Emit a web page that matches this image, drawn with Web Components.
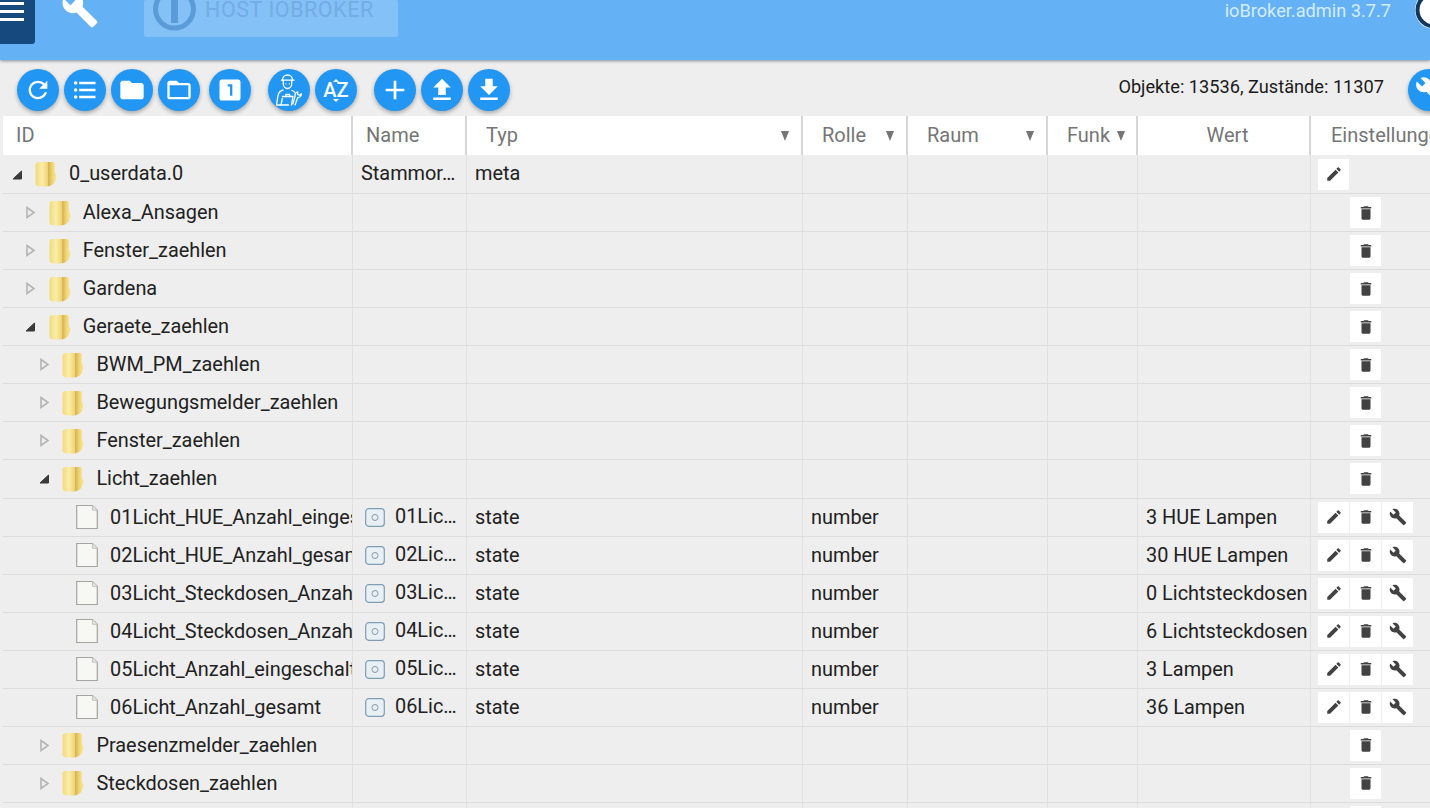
<!DOCTYPE html>
<html lang="de">
<head>
<meta charset="utf-8">
<title>ioBroker.admin</title>
<style>
  html, body {
    margin: 0;
    height: 808px;
    overflow: hidden;
    background: #eeeeee;
    font-family: Roboto, "Liberation Sans", sans-serif;
  }
  object-browser { display: block; }
</style>
</head>
<body>
<object-browser></object-browser>

<script>
const ICONS = {
  refresh: "M17.65 6.35C16.2 4.9 14.21 4 12 4c-4.42 0-7.99 3.58-7.99 8s3.57 8 7.99 8c3.73 0 6.84-2.55 7.73-6h-2.08c-.82 2.33-3.04 4-5.65 4-3.31 0-6-2.69-6-6s2.69-6 6-6c1.66 0 3.14.69 4.22 1.78L13 11h7V4l-2.35 2.35z",
  list: "M4 10.5c-.83 0-1.5.67-1.5 1.5s.67 1.5 1.5 1.5 1.5-.67 1.5-1.5-.67-1.5-1.5-1.5zm0-6c-.83 0-1.5.67-1.5 1.5S3.17 7.5 4 7.5 5.5 6.83 5.5 6 4.83 4.5 4 4.5zm0 12c-.83 0-1.5.68-1.5 1.5s.68 1.5 1.5 1.5 1.5-.68 1.5-1.5-.67-1.5-1.5-1.5zM7 19h14v-2H7v2zm0-6h14v-2H7v2zm0-8v2h14V5H7z",
  folder: "M10 4H4c-1.1 0-1.99.9-1.99 2L2 18c0 1.1.9 2 2 2h16c1.1 0 2-.9 2-2V8c0-1.1-.9-2-2-2h-8l-2-2z",
  folderOpen: "M20 6h-8l-2-2H4c-1.1 0-1.99.9-1.99 2L2 18c0 1.1.9 2 2 2h16c1.1 0 2-.9 2-2V8c0-1.1-.9-2-2-2zm0 12H4V8h16v10z",
  one: "M19 3H5c-1.1 0-2 .9-2 2v14c0 1.1.9 2 2 2h14c1.1 0 2-.9 2-2V5c0-1.1-.9-2-2-2zm-5 14h-2V9h-2V7h4v10z",
  add: "M19 13h-6v6h-2v-6H5v-2h6V5h2v6h6v2z",
  upload: "M9 16h6v-6h4l-7-7-7 7h4zm-4 2h14v2H5z",
  download: "M19 9h-4V3H9v6H5l7 7 7-7zM5 18v2h14v-2H5z",
  edit: "M3 17.25V21h3.75L17.81 9.94l-3.75-3.75L3 17.25zM20.71 7.04c.39-.39.39-1.02 0-1.41l-2.34-2.34c-.39-.39-1.02-.39-1.41 0l-1.83 1.83 3.75 3.75 1.83-1.83z",
  del: "M6 19c0 1.1.9 2 2 2h8c1.1 0 2-.9 2-2V7H6v12zM19 4h-3.5l-1-1h-5l-1 1H5v2h14V4z",
  build: "M22.7 19l-9.1-9.1c.9-2.3.4-5-1.5-6.9-2-2-5-2.4-7.4-1.3L9 6 6 9 1.6 4.7C.4 7.1.9 10.1 2.9 12.1c1.9 1.9 4.6 2.4 6.9 1.5l9.1 9.1c.4.4 1 .4 1.4 0l2.3-2.3c.5-.4.5-1.1.1-1.4z"
};

function svgIcon(name, size, color) {
  return `<svg width="${size}" height="${size}" viewBox="0 0 24 24" fill="${color}"><path d="${ICONS[name]}"/></svg>`;
}

class AppHeader extends HTMLElement {
  constructor() {
    super();
    this.attachShadow({ mode: "open" });
    this.shadowRoot.innerHTML = `
      <style>
        :host {
          display: flex;
          align-items: flex-start;
          position: relative;
          z-index: 2;
          height: 60px;
          background: #64b2f5;
          box-shadow: 0 1px 3px rgba(40,60,90,.55);
        }
        .menu {
          width: 35px;
          height: 44px;
          flex: none;
          background: #164a7e;
          border-radius: 0 0 3px 0;
          display: flex;
          flex-direction: column;
          gap: 5px;
          overflow: hidden;
        }
        .menu i { display: block; width: 24px; height: 3px; background: #fff; flex: none; }
        .menu i:first-child { margin-top: 1.500px; }
        .tool { margin-left: 26px; width: 40px; height: 29px; flex: none; overflow: hidden; }
        .tool svg { display: block; margin-top: -9px; }
        .host {
          margin-left: 43px;
          width: 254px;
          height: 37px;
          flex: none;
          display: flex;
          align-items: flex-start;
          background: rgba(255,255,255,.2);
          border-radius: 2px;
          overflow: hidden;
        }
        .host svg { flex: none; margin-left: 7px; }
        .host span {
          margin-left: 6px;
          font-size: 21.500px;
          line-height: 20px;
          letter-spacing: .55px;
          white-space: nowrap;
          color: #74ace4;
        }
        .ver {
          margin-left: auto;
          font-size: 18.200px;
          line-height: 21px;
          color: #d5ecfd;
          white-space: nowrap;
        }
        .logo { margin-left: 24px; width: 15px; height: 33px; flex: none; overflow: hidden; }
      </style>
      <div class="menu"><i></i><i></i><i></i></div>
      <div class="tool">
        <svg width="38" height="38" viewBox="0 0 24 24" fill="#fff"><path d="${ICONS.build}"/></svg>
      </div>
      <div class="host">
        <svg width="48" height="37" viewBox="0 0 48 37">
          <circle cx="23.500" cy="9" r="19" fill="none" stroke="#5b9bd8" stroke-width="5"/>
          <rect x="20" y="-14" width="7" height="37" fill="#5b9bd8"/>
        </svg>
        <span>HOST IOBROKER</span>
      </div>
      <div class="ver">ioBroker.admin 3.7.7</div>
      <div class="logo">
        <svg width="40" height="33" viewBox="0 0 40 33">
          <circle cx="19" cy="10" r="19" fill="#fff"/>
          <circle cx="19" cy="10" r="16.500" fill="none" stroke="#12365e" stroke-width="4"/>
        </svg>
      </div>
    `;
  }
}

class RoundBtn extends HTMLElement {
  constructor() {
    super();
    this.attachShadow({ mode: "open" });
    this.shadowRoot.innerHTML = `
      <style>
        :host {
          display: flex;
          align-items: center;
          justify-content: center;
          flex: none;
          width: 42px;
          height: 42px;
          border-radius: 50%;
          background: #2196f3;
          box-shadow: 0 2px 4px rgba(0,0,0,.3);
        }
        svg { display: block; }
      </style>
      <slot></slot>
      ${this.getAttribute("icon") ? svgIcon(this.getAttribute("icon"), this.getAttribute("size") || 28, "#fff") : ""}
    `;
  }
}

class ToolBar extends HTMLElement {
  constructor() {
    super();
    this.attachShadow({ mode: "open" });
    this.shadowRoot.innerHTML = `
      <style>
        :host {
          display: flex;
          align-items: flex-start;
          gap: 5px;
          height: 56px;
          box-sizing: border-box;
          padding: 9px 0 0 17px;
          overflow: hidden;
        }
        .ml9 { margin-left: 4px; }
        .ml17 { margin-left: 12px; }
        .status {
          margin-left: auto;
          margin-right: 19px;
          font-size: 18.200px;
          line-height: 36px;
          color: #1a1a1a;
          white-space: nowrap;
        }
        .last { margin-right: -20px; }
        .az {
          display: flex;
          flex-direction: column;
          align-items: center;
          color: #fff;
          font-size: 20px;
          font-weight: 500;
          line-height: 15px;
        }
        .az i {
          display: block;
          width: 0;
          height: 0;
          border-left: 3px solid transparent;
          border-right: 3px solid transparent;
        }
        .az i:first-child { border-bottom: 3px solid #fff; margin-bottom: 1px; }
        .az i:last-child { border-top: 3px solid #fff; margin-top: 1px; }
      </style>
      <round-btn icon="refresh"></round-btn>
      <round-btn icon="list"></round-btn>
      <round-btn icon="folder"></round-btn>
      <round-btn icon="folderOpen"></round-btn>
      <round-btn icon="one" class="ml9"></round-btn>
      <round-btn class="ml17">
        <svg width="32" height="34" viewBox="0 0 32 34" fill="none" stroke="#fff" stroke-width="1.300" stroke-linecap="round" stroke-linejoin="round">
          <path d="M9.500 7c0-3 2.200-5 5-5s5 2 5 5"/>
          <path d="M8.500 7.200h12.500"/>
          <path d="M10.300 7.500v3.300c0 2.700 1.900 4.700 4.200 4.700s4.200-2 4.200-4.700V7.500"/>
          <path d="M12.800 10.800h.1M16.300 10.800h.1"/>
          <path d="M10 17c-3 .8-4.600 3-5.100 6L3.500 32h12"/>
          <path d="M8 32l1.300-6.500"/>
          <path d="M9.500 23.500h10.500l-1.600 8.500"/>
          <path d="M12.500 23.500l.5-2h3.500l.5 2"/>
          <path d="M19 17.500c1 .3 1.900.8 2.500 1.500"/>
          <path d="M22 32l2.800-7.400c2.300-.1 3.700-1.800 3.500-3.900l-2.100 1.600-1.700-1 .2-2.500c-2.100.5-3.200 2.200-2.600 4.300L19.800 31"/>
        </svg>
      </round-btn>
      <round-btn>
        <div class="az"><i></i><span>AZ</span><i></i></div>
      </round-btn>
      <round-btn icon="add" class="ml17" size="32"></round-btn>
      <round-btn icon="upload" size="30"></round-btn>
      <round-btn icon="download" size="30"></round-btn>
      <div class="status">Objekte: 13536, Zustände: 11307</div>
      <round-btn class="last">${svgIcon("build", 28, "#fff")}</round-btn>
    `;
  }
}

const COLUMNS = "350px 114px 336px 105px 140px 90px 173px 1fr";

class ColHead extends HTMLElement {
  constructor() {
    super();
    const filter = this.hasAttribute("filter");
    const center = this.hasAttribute("center");
    const pad = this.getAttribute("pad") || 0;
    const arrow = this.getAttribute("arrow") || 12;
    this.attachShadow({ mode: "open" });
    this.shadowRoot.innerHTML = `
      <style>
        :host {
          display: flex;
          align-items: center;
          justify-content: ${center ? "center" : "space-between"};
          box-sizing: border-box;
          padding: 0 ${arrow}px 2px ${pad}px;
          border-right: 2px solid #d6d6d6;
          color: #757575;
          font-size: 20px;
          white-space: nowrap;
          overflow: hidden;
        }
        :host(:last-child) { border-right: 0; }
        i {
          width: 0;
          height: 0;
          margin-top: 2px;
          border-left: 4.500px solid transparent;
          border-right: 4.500px solid transparent;
          border-top: 10px solid #757575;
        }
      </style>
      <span><slot></slot></span>
      ${filter ? "<i></i>" : ""}
    `;
  }
}

class TableHead extends HTMLElement {
  constructor() {
    super();
    this.attachShadow({ mode: "open" });
    this.shadowRoot.innerHTML = `
      <style>
        :host {
          display: grid;
          grid-template-columns: ${COLUMNS};
          height: 39px;
          margin-left: 3px;
          background: #fff;
        }
      </style>
      <col-head pad="13">ID</col-head>
      <col-head pad="13">Name</col-head>
      <col-head pad="19" filter arrow="12">Typ</col-head>
      <col-head pad="19" filter arrow="12">Rolle</col-head>
      <col-head pad="19" filter arrow="12">Raum</col-head>
      <col-head pad="19" filter arrow="11">Funk</col-head>
      <col-head pad="8" center arrow="0">Wert</col-head>
      <col-head pad="20">Einstellungen</col-head>
    `;
  }
}

class ActionBtn extends HTMLElement {
  constructor() {
    super();
    const icon = this.getAttribute("icon");
    this.attachShadow({ mode: "open" });
    this.shadowRoot.innerHTML = `
      <style>
        :host {
          display: flex;
          align-items: center;
          justify-content: center;
          width: 31px;
          height: 31px;
          flex: none;
          background: ${icon ? "#fff" : "transparent"};
        }
      </style>
      ${icon ? svgIcon(icon, 18, "#424242") : ""}
    `;
  }
}

class NodeIcon extends HTMLElement {
  constructor() {
    super();
    const folder = this.getAttribute("kind") === "folder";
    this.attachShadow({ mode: "open" });
    this.shadowRoot.innerHTML = `
      <style>
        :host { display: block; flex: none; width: 22px; height: 26px; }
        svg { display: block; }
      </style>
      ${folder ? `
      <svg width="22" height="26" viewBox="0 0 22 26">
        <defs>
          <linearGradient id="f" x1="0" y1="0" x2="1" y2="0">
            <stop offset="0" stop-color="#f3d97c"/>
            <stop offset=".5" stop-color="#fbeea8"/>
            <stop offset="1" stop-color="#ecd070"/>
          </linearGradient>
          <linearGradient id="g" x1="0" y1="0" x2="1" y2="0">
            <stop offset="0" stop-color="#d6b24c"/>
            <stop offset=".6" stop-color="#f3da7c"/>
            <stop offset="1" stop-color="#f7e595"/>
          </linearGradient>
        </defs>
        <path d="M.5 4C.5 2 2 1 4 1h8c.9 0 1.500.7 1.500 1.500V24c0 1-.8 1.500-2 1.500H4.500C2 25.500.5 24 .5 22z" fill="url(#f)"/>
        <path d="M13 1h4.500c1.400 0 2.300.9 2.300 2.200V11l1.700 4.500-1.700 5.500c-1 2-3.500 3.500-6.800 4.500z" fill="url(#g)"/>
      </svg>` : `
      <svg width="22" height="26" viewBox="0 0 22 26">
        <path d="M.7 1.500h15.800l4.800 4.800v18.200H.7z" fill="#f7f7f4" stroke="#a4a4a0" stroke-width="1.200"/>
        <path d="M16.500 1.500v4.800h4.800" fill="#e6e6e2" stroke="#c2c2be" stroke-width="1"/>
      </svg>`}
    `;
  }
}

class TreeRow extends HTMLElement {
  constructor() {
    super();
    const a = (n) => this.getAttribute(n) || "";
    const depth = Number(a("depth"));
    const state = a("state");
    const isFile = state === "";
    const actions = a("actions") || "d";
    const indent = depth * 13.7;

    let arrow = "";
    if (state === "open") {
      arrow = `<svg width="11" height="11" viewBox="0 0 11 11"><path d="M1 10 L9.500 10 L9.500 2 Z" fill="#3a3a3a" stroke="#3a3a3a" stroke-linejoin="round"/></svg>`;
    } else if (state === "closed") {
      arrow = `<svg width="11" height="13" viewBox="0 0 11 13"><path d="M2 1.500 L9 6.500 L2 11.500 Z" fill="none" stroke="#b4b4b4" stroke-width="1.600"/></svg>`;
    }

    let nameCell = "";
    if (a("name")) {
      nameCell = isFile
        ? `<svg class="chan" width="20" height="19" viewBox="0 0 20 19"><rect x=".7" y=".7" width="18.600" height="17.600" rx="3" fill="#e8f0f5" stroke="#7f9db3" stroke-width="1.200"/><circle cx="10" cy="9.500" r="3" fill="none" stroke="#8a9aa6" stroke-width="1"/></svg><span class="n2">${a("name")}</span>`
        : `<span class="n1">${a("name")}</span>`;
    }

    const btns = [
      actions.includes("e") ? "edit" : "",
      actions.includes("d") ? "del" : "",
      actions.includes("w") ? "build" : ""
    ];

    this.attachShadow({ mode: "open" });
    this.shadowRoot.innerHTML = `
      <style>
        :host {
          display: grid;
          grid-template-columns: ${COLUMNS};
          height: 38.070px;
          box-sizing: border-box;
          margin-left: 3px;
          border-bottom: 1px solid #dcdcdc;
          font-size: 19.900px;
          color: #212121;
        }
        :host([depth="0"]) { height: 39px; }
        .c {
          display: flex;
          align-items: center;
          box-sizing: border-box;
          border-right: 1px solid #e0e0e0;
          padding-left: 8px;
          white-space: nowrap;
          overflow: hidden;
          min-width: 0;
        }
        .c span { position: relative; }
        :host([depth="0"]) .c span { top: -1px; }
        .id { padding-left: ${8 + indent}px; }
        .arrow { width: 14px; margin-left: -1px; flex: none; display: flex; justify-content: center; }
        .id node-icon { margin-left: 11px; }
        .id span { margin-left: 12px; }
        .chan { flex: none; margin-left: 4px; }
        .c .n1 { top: -1px; }
        .c .n2 { margin-left: 10px; top: -1px; }
        .acts {
          padding-left: 7px;
          gap: 1px;
          border-right: 0;
        }
      </style>
      <div class="c id"><div class="arrow">${arrow}</div><node-icon kind="${isFile ? "file" : "folder"}"></node-icon><span>${a("label")}</span></div>
      <div class="c">${nameCell}</div>
      <div class="c"><span>${a("typ")}</span></div>
      <div class="c"><span>${a("rolle")}</span></div>
      <div class="c"></div>
      <div class="c"></div>
      <div class="c"><span>${a("wert")}</span></div>
      <div class="c acts">${btns.map((b) => `<action-btn icon="${b}"></action-btn>`).join("")}</div>
    `;
  }
}

class ObjectBrowser extends HTMLElement {
  constructor() {
    super();
    const licht = [
      ["01Licht_HUE_Anzahl_einges", "01Lic…", "3 HUE Lampen"],
      ["02Licht_HUE_Anzahl_gesam", "02Lic…", "30 HUE Lampen"],
      ["03Licht_Steckdosen_Anzah", "03Lic…", "0 Lichtsteckdosen"],
      ["04Licht_Steckdosen_Anzah", "04Lic…", "6 Lichtsteckdosen"],
      ["05Licht_Anzahl_eingeschalt", "05Lic…", "3 Lampen"],
      ["06Licht_Anzahl_gesamt", "06Lic…", "36 Lampen"]
    ];
    const folder = (depth, state, label) =>
      `<tree-row depth="${depth}" state="${state}" label="${label}"></tree-row>`;
    this.attachShadow({ mode: "open" });
    this.shadowRoot.innerHTML = `
      <style>
        :host { display: block; height: 808px; overflow: hidden; }
      </style>
      <app-header></app-header>
      <tool-bar></tool-bar>
      <table-head></table-head>
      <tree-row depth="0" state="open" label="0_userdata.0" name="Stammor…" typ="meta" actions="e"></tree-row>
      ${folder(1, "closed", "Alexa_Ansagen")}
      ${folder(1, "closed", "Fenster_zaehlen")}
      ${folder(1, "closed", "Gardena")}
      ${folder(1, "open", "Geraete_zaehlen")}
      ${folder(2, "closed", "BWM_PM_zaehlen")}
      ${folder(2, "closed", "Bewegungsmelder_zaehlen")}
      ${folder(2, "closed", "Fenster_zaehlen")}
      ${folder(2, "open", "Licht_zaehlen")}
      ${licht.map((r) => `<tree-row depth="3" label="${r[0]}" name="${r[1]}" typ="state" rolle="number" wert="${r[2]}" actions="edw"></tree-row>`).join("")}
      ${folder(2, "closed", "Praesenzmelder_zaehlen")}
      ${folder(2, "closed", "Steckdosen_zaehlen")}
      <tree-row depth="2" state="closed" label=""></tree-row>
    `;
  }
}

customElements.define("app-header", AppHeader);
customElements.define("round-btn", RoundBtn);
customElements.define("tool-bar", ToolBar);
customElements.define("col-head", ColHead);
customElements.define("table-head", TableHead);
customElements.define("action-btn", ActionBtn);
customElements.define("node-icon", NodeIcon);
customElements.define("tree-row", TreeRow);
customElements.define("object-browser", ObjectBrowser);
</script>
</body>
</html>
